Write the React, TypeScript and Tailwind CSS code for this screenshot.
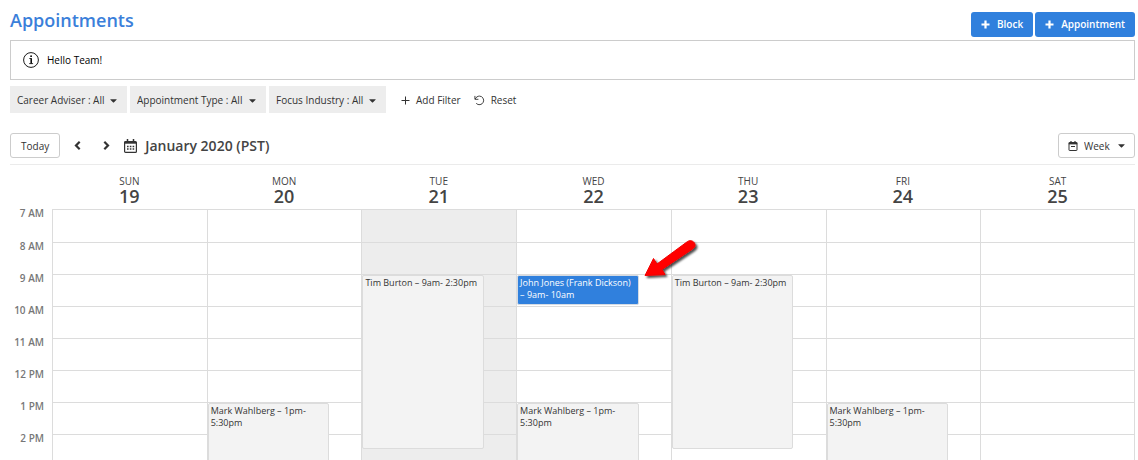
import { FaCaretDown } from "react-icons/fa";

type CalendarEvent = {
  day: number;
  start: number;
  hours: number;
  title: string;
  booked?: boolean;
};

const HOUR_HEIGHT = 32;
const TODAY = 21;

const filters = [
  { label: "Career Adviser", width: "w-[117px]" },
  { label: "Appointment Type", width: "w-[136px]" },
  { label: "Focus Industry", width: "w-[117px]" },
];

const days = [
  { name: "SUN", date: 19 },
  { name: "MON", date: 20 },
  { name: "TUE", date: 21 },
  { name: "WED", date: 22 },
  { name: "THU", date: 23 },
  { name: "FRI", date: 24 },
  { name: "SAT", date: 25 },
];

const hours = [7, 8, 9, 10, 11, 12, 13, 14];

const events: CalendarEvent[] = [
  { day: 20, start: 13, hours: 4.5, title: "Mark Wahlberg – 1pm- 5:30pm" },
  { day: 21, start: 9, hours: 5.5, title: "Tim Burton – 9am- 2:30pm" },
  { day: 22, start: 9, hours: 1, title: "John Jones (Frank Dickson) – 9am- 10am", booked: true },
  { day: 22, start: 13, hours: 4.5, title: "Mark Wahlberg – 1pm- 5:30pm" },
  { day: 23, start: 9, hours: 5.5, title: "Tim Burton – 9am- 2:30pm" },
  { day: 24, start: 13, hours: 4.5, title: "Mark Wahlberg – 1pm- 5:30pm" },
];

function hourLabel(hour: number) {
  return hour > 12 ? `${hour - 12} PM` : `${hour} ${hour === 12 ? "PM" : "AM"}`;
}

function InfoIcon() {
  return (
    <svg className="h-4 w-4 text-black" viewBox="0 0 16 16" fill="none" aria-hidden="true">
      <circle cx="8" cy="8" r="7.4" stroke="currentColor" strokeWidth="0.9" />
      <path d="M6.3 6.5h2M6.2 11.6h3.9" stroke="currentColor" strokeWidth="0.8" />
      <path d="M8.2 6.2v5.4" stroke="currentColor" strokeWidth="1.5" />
      <circle cx="8.1" cy="4.2" r="0.9" fill="currentColor" />
    </svg>
  );
}

function PlusIcon({ thick = false }: { thick?: boolean }) {
  return (
    <svg className="h-[9px] w-[9px]" viewBox="0 0 9 9" stroke="currentColor" aria-hidden="true">
      <path d="M4.5 0.5v8M0.5 4.5h8" strokeWidth={thick ? 2.2 : 1} />
    </svg>
  );
}

function Chevron({ direction }: { direction: "left" | "right" }) {
  return (
    <svg className="h-[9px] w-[7px]" viewBox="0 0 7 9" fill="none" stroke="currentColor" aria-hidden="true">
      <path d={direction === "left" ? "M5.7 0.8L2 4.5l3.7 3.7" : "M1.3 0.8L5 4.5 1.3 8.2"} strokeWidth="2.2" />
    </svg>
  );
}

function ResetIcon() {
  return (
    <svg className="h-[11px] w-[11px]" viewBox="0 0 12 12" fill="none" stroke="currentColor" aria-hidden="true">
      <path d="M1 1v3.7h3.8" />
      <path d="M1.3 4.4C2.3 2.3 4 1.2 6 1.2a4.7 4.7 0 1 1-3.6 7.9" />
    </svg>
  );
}

function MonthIcon() {
  return (
    <svg className="h-[14px] w-[13px]" viewBox="0 0 13 14" fill="none" stroke="currentColor" aria-hidden="true">
      <rect x="0.6" y="2.5" width="11.8" height="10.9" rx="1" strokeWidth="1.2" />
      <path d="M0.5 3.8h12" strokeWidth="1.8" />
      <path d="M3.5 0v3M9.5 0v3" strokeWidth="1.5" />
      <path d="M3 7.5h7.2M3 10h7.2" strokeWidth="1.4" strokeDasharray="1.6 1.2" />
    </svg>
  );
}

function WeekIcon() {
  return (
    <svg className="h-[10px] w-[10px]" viewBox="0 0 10 10" fill="none" stroke="currentColor" aria-hidden="true">
      <rect x="1" y="1.5" width="8" height="8" rx="0.5" />
      <path d="M0.8 2.4h8.4" strokeWidth="2" />
      <path d="M3 0v2M7 0v2M3 5.5h4" strokeWidth="1.2" />
    </svg>
  );
}

function Arrow() {
  return (
    <svg
      className="pointer-events-none absolute -top-[38px] left-full z-20 ml-1 h-[46px] w-[58px]"
      viewBox="0 0 58 46"
      aria-hidden="true"
    >
      <defs>
        <filter id="arrow-shadow" x="-20%" y="-20%" width="150%" height="150%">
          <feDropShadow dx="2" dy="2" stdDeviation="1.2" floodColor="#000" floodOpacity="0.7" />
        </filter>
      </defs>
      <path
        d="M3 37.5L11.5 20.5L15 26L45.5 3.5C49 1.3 53 3.8 53 7C53 8.8 52 10 50.5 11L20 31.5L23 36.5Z"
        fill="#ff0000"
        stroke="#f00000"
        strokeWidth="1"
        strokeLinejoin="round"
        filter="url(#arrow-shadow)"
      />
    </svg>
  );
}

function EventCard({ event }: { event: CalendarEvent }) {
  const tone = event.booked
    ? "border-[#d5dbe3] bg-[#3080dd] font-medium text-white"
    : "border-[#dcdcdc] bg-[#f3f3f3] text-[#333]";

  return (
    <div
      className={`absolute top-0 left-0 z-10 w-[79%] rounded-xs border pt-px pr-1 pl-0.5 text-[9px] leading-3 ${tone}`}
      style={{ height: event.hours * HOUR_HEIGHT - 2 }}
    >
      {event.title}
      {event.booked && <Arrow />}
    </div>
  );
}

function Header() {
  return (
    <header className="flex h-10 items-center justify-between">
      <h1 className="text-lg font-semibold text-[#3b7fda]">Appointments</h1>
      <div className="flex gap-0.5 pt-2">
        {["Block", "Appointment"].map((label) => (
          <button
            className="flex h-[25px] items-center gap-[7px] rounded-[3px] bg-[#3080dd] px-2.5 text-[10px] font-semibold text-white"
            key={label}
            type="button"
          >
            <PlusIcon thick />
            {label}
          </button>
        ))}
      </div>
    </header>
  );
}

function FilterBar() {
  return (
    <div className="mt-1.5 flex items-center gap-[3px] text-[10px] text-[#333]">
      {filters.map((filter) => (
        <div className={`relative ${filter.width}`} key={filter.label}>
          <select
            aria-label={filter.label}
            className="block h-[27px] w-full appearance-none bg-[#ededed] pt-0.5 pl-[7px]"
          >
            <option>{filter.label} : All</option>
          </select>
          <FaCaretDown className="pointer-events-none absolute top-[9px] right-2 h-[11px] w-[11px]" />
        </div>
      ))}
      <button className="ml-3 flex items-center gap-1.5 pt-0.5" type="button">
        <PlusIcon />
        Add Filter
      </button>
      <button className="ml-2.5 flex items-center gap-1.5 pt-0.5" type="button">
        <ResetIcon />
        Reset
      </button>
    </div>
  );
}

function Toolbar() {
  return (
    <div className="mt-5 flex items-center border-b border-[#ebebeb] pb-1.5 text-[#333]">
      <button className="h-[25px] rounded-[3px] border border-[#ccc] px-2.5 pt-0.5 text-[10px]" type="button">
        Today
      </button>
      <button aria-label="Previous week" className="ml-3 p-0.5" type="button">
        <Chevron direction="left" />
      </button>
      <button aria-label="Next week" className="ml-[18px] p-0.5" type="button">
        <Chevron direction="right" />
      </button>
      <div className="ml-3 flex items-center gap-2">
        <MonthIcon />
        <h2 className="text-sm leading-5 font-semibold text-[#444]">January 2020 (PST)</h2>
      </div>
      <div className="relative ml-auto w-[77px]">
        <span className="pointer-events-none absolute top-2 left-2.5">
          <WeekIcon />
        </span>
        <select
          aria-label="Calendar view"
          className="block h-[25px] w-full appearance-none rounded-[3px] border border-[#ccc] bg-transparent pt-0.5 pl-[25px] text-[10px]"
        >
          <option>Week</option>
          <option>Day</option>
          <option>Month</option>
        </select>
        <FaCaretDown className="pointer-events-none absolute top-[7px] right-2 h-[11px] w-[11px]" />
      </div>
    </div>
  );
}

function WeekCalendar() {
  return (
    <table className="w-full table-fixed border-separate border-spacing-0">
      <thead>
        <tr className="h-11 text-[#444]">
          <td className="w-[42px]" />
          {days.map((day) => (
            <th className="p-0 pt-2.5 align-top" key={day.date} scope="col">
              <div className="text-[10px] leading-3 font-medium">{day.name}</div>
              <div className="text-lg leading-[18px] font-semibold">{day.date}</div>
            </th>
          ))}
        </tr>
      </thead>
      <tbody>
        {hours.map((hour) => (
          <tr className="h-8 first:h-[33px]" key={hour}>
            <th className="p-0 pr-2 align-top text-[10px] leading-2 font-semibold text-[#777]" scope="row">
              <div className="text-right whitespace-nowrap">{hourLabel(hour)}</div>
            </th>
            {days.map((day) => (
              <td
                className={`relative border-t border-l border-[#dcdcdc] p-0 last:border-r ${
                  day.date === TODAY ? "bg-[#ededed]" : ""
                }`}
                key={day.date}
              >
                {events
                  .filter((event) => event.day === day.date && event.start === hour)
                  .map((event) => (
                    <EventCard event={event} key={event.title} />
                  ))}
              </td>
            ))}
          </tr>
        ))}
      </tbody>
    </table>
  );
}

export default function App() {
  return (
    <main className="h-screen overflow-hidden bg-white pr-[3px] pl-2.5 font-['Open_Sans','Noto_Sans',sans-serif]">
      <Header />
      <div className="flex h-10 items-center gap-2 border border-[#ccc] px-3 text-[10px] text-black" role="status">
        <InfoIcon />
        Hello Team!
      </div>
      <FilterBar />
      <Toolbar />
      <WeekCalendar />
    </main>
  );
}
